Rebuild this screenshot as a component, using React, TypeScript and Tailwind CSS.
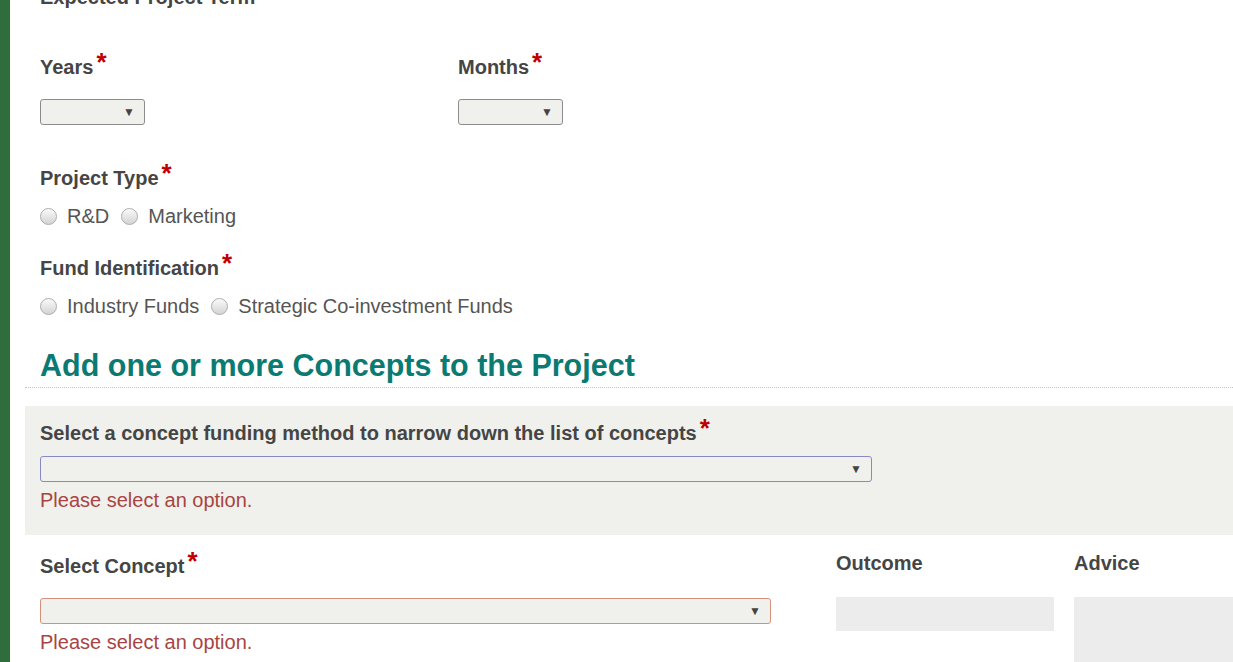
const labelCls = "text-[20px] leading-[24px] font-bold text-[#454545]";

function Req() {
  return <span className="ml-[3px] align-[3px] text-[26px] leading-[0] font-bold text-[#c00000]">*</span>;
}

function Label({ text, className = "" }: { text: string; className?: string }) {
  return (
    <div className={`h-[24px] ${labelCls} ${className}`}>
      {text}
      <Req />
    </div>
  );
}

function Select({ width, border, className = "" }: { width: string; border: string; className?: string }) {
  return (
    <div
      className={`flex h-[26px] items-center justify-end rounded-[3px] border bg-[#f0f1ec] pr-[9px] ${width} ${border} ${className}`}
    >
      <span className="text-[12px] leading-none text-[#444]">▼</span>
    </div>
  );
}

function Radio({ label }: { label: string }) {
  return (
    <label className="flex items-center">
      <span className="h-[17px] w-[17px] rounded-full border border-[#adadad] bg-gradient-to-b from-[#fafafa] to-[#d4d4d4]" />
      <span className="ml-[10px] mr-[12px] text-[20px] leading-[24px] text-[#555]">{label}</span>
    </label>
  );
}

export default function App() {
  return (
    <div className="flex h-[662px] w-[1233px] overflow-hidden bg-white font-['Liberation_Sans',Arial,sans-serif]">
      <div className="w-[10px] shrink-0 bg-[#2f6d3d]" />

      <main className="flex-1 pl-[15px]">
        <div className="pl-[15px]">
          <div className={`${labelCls} mt-[-15px]`}>Expected Project Term</div>

          <div className="mt-[46px] flex">
            <div className="w-[418px]">
              <Label text="Years" />
              <Select width="w-[105px]" border="border-[#8c8c8c]" className="mt-[20px]" />
            </div>
            <div>
              <Label text="Months" />
              <Select width="w-[105px]" border="border-[#8c8c8c]" className="mt-[20px]" />
            </div>
          </div>

          <Label text="Project Type" className="mt-[41px]" />
          <div className="mt-[14px] flex">
            <Radio label="R&D" />
            <Radio label="Marketing" />
          </div>

          <Label text="Fund Identification" className="mt-[28px]" />
          <div className="mt-[14px] flex">
            <Radio label="Industry Funds" />
            <Radio label="Strategic Co-investment Funds" />
          </div>
        </div>

        <div className="mt-[29px] border-b border-dotted border-[#c4c4c4] pb-[4px] pl-[15px]">
          <h2 className="text-[30.5px] leading-[36px] font-bold text-[#0b7a72]">
            Add one or more Concepts to the Project
          </h2>
        </div>

        <section className="mt-[18px] bg-[#f0f1ec] pb-[23px] pl-[15px] pt-[15px]">
          <Label text="Select a concept funding method to narrow down the list of concepts" />
          <Select width="w-[832px]" border="border-[#8a88c0]" className="mt-[11px]" />
          <div className="mt-[6px] text-[20px] leading-[24px] text-[#a94442]">Please select an option.</div>
        </section>

        <div className="flex pl-[15px]">
          <div className="w-[731px] pt-[19px]">
            <Label text="Select Concept" />
            <Select width="w-[731px]" border="border-[#d3917a]" className="mt-[20px]" />
            <div className="mt-[6px] text-[20px] leading-[24px] text-[#a94442]">Please select an option.</div>
          </div>
          <div className="ml-[65px] w-[218px] pt-[16px]">
            <div className={labelCls}>Outcome</div>
            <div className="mt-[22px] h-[34px] bg-[#ececec]" />
          </div>
          <div className="ml-[20px] flex-1 pt-[16px]">
            <div className={labelCls}>Advice</div>
            <div className="mt-[22px] h-[100px] bg-[#ececec]" />
          </div>
        </div>
      </main>
    </div>
  );
}
